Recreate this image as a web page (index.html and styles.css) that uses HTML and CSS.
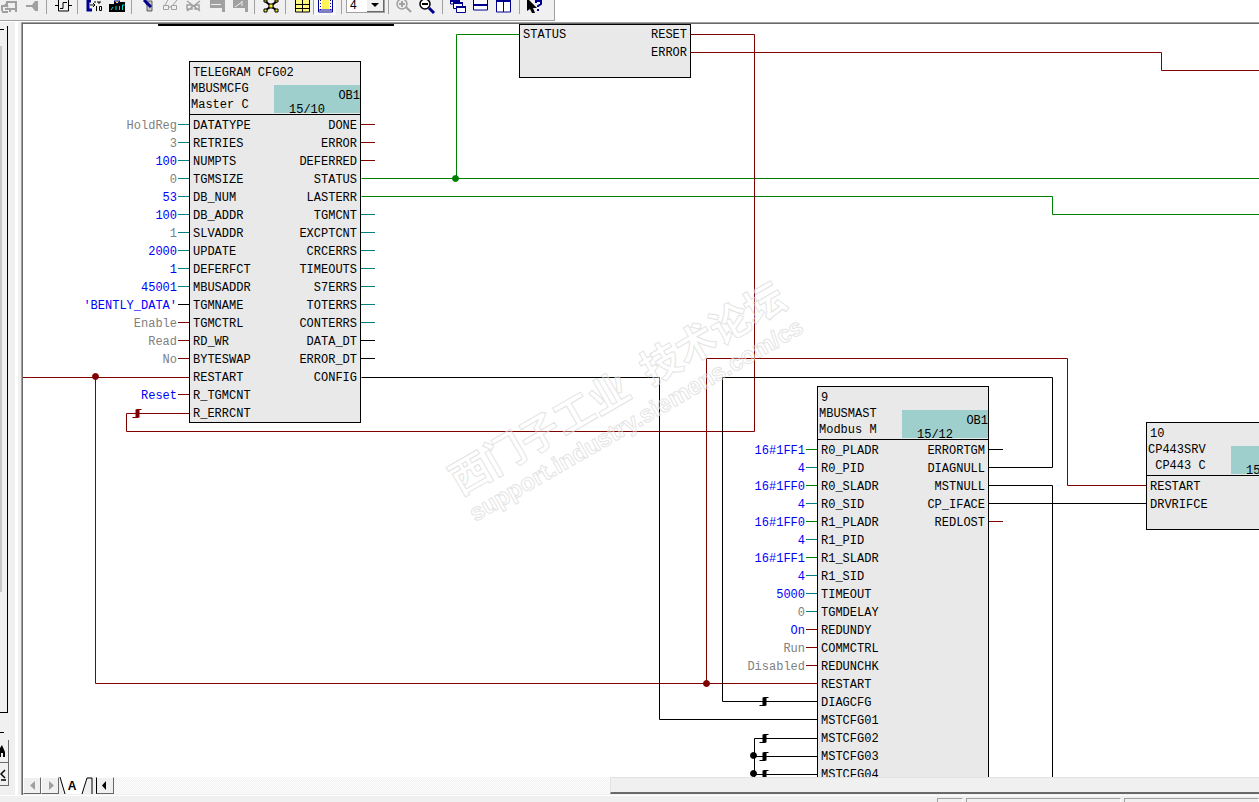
FILE: index.html
```html
<!DOCTYPE html>
<html lang="en">
<head>
    <meta charset="UTF-8">
    <meta name="viewport" content="width=device-width, initial-scale=1.0">
    <title>CFC chart - Modbus</title>
    <link rel="stylesheet" href="styles.css">
</head>
<body>
    <div class="toolbar-row">
        <div class="toolbar">
            <button class="tool first" aria-label="Compile"><svg viewBox="0 0 18 14"><g fill="none" stroke="#a0a0a0" stroke-width="2"><path d="M2 10V5h5V1h10M2 11h6M16 0v11M10 11V8h6M5 8h4M5 3l3 3"/></g></svg></button>
            <button class="tool" aria-label="Step"><svg viewBox="0 0 18 14"><path d="M3 4h6l3-4h3v10h-3L9 6H3z" fill="#a0a0a0"/></svg></button>
            <span class="sep"></span>
            <button class="tool" aria-label="Block"><svg viewBox="0 0 18 14"><path d="M4.500 -2v12h10V-2M1 4.500h3M15 4.500h3M6 7.500h3V1.500h4" fill="none" stroke="#000"/></svg></button>
            <span class="sep"></span>
            <button class="tool" aria-label="Convert"><svg viewBox="0 0 18 14"><path d="M6 0H3v9h4" fill="none" stroke="#000090" stroke-width="3"/><path d="M5 4h5M8 2l2 2-2 2M10 0v2M13 0v2h2V0M11.500 5v5M14.500 5.500h2v4h-2z" fill="none" stroke="#000"/></svg></button>
            <button class="tool" aria-label="Download"><svg viewBox="0 0 18 14"><path d="M1 3h5V1h11v10H1z" fill="#000"/><path d="M3 9l2-3M8 9V5M11.500 9V5M14.500 9V4h2" stroke="#00e0e0" fill="none"/><path d="M6 0h6L9 3z" fill="#ffe840" stroke="#000090"/></svg></button>
            <span class="sep"></span>
            <button class="tool" aria-label="Edit"><svg viewBox="0 0 18 14"><path d="M6 0h7v10H8V5z" fill="#c0c0c0" stroke="#606060"/><path d="M5 -1l7 7" stroke="#000090" stroke-width="3"/></svg></button>
            <button class="tool" aria-label="Watch"><svg viewBox="0 0 18 14"><path d="M1.500 4.500h5v4h-5zM9.500 4.500h5v4h-5zM6 6h4M3 4l3-5M11 4l4-5" fill="none" stroke="#a0a0a0"/></svg></button>
            <button class="tool" aria-label="Unwatch"><svg viewBox="0 0 18 14"><path d="M2 0l13 10M2 10L15 0M2 4h5v4H2zM10 4h4v4h-4z" fill="none" stroke="#a0a0a0" stroke-width="1.500"/></svg></button>
            <button class="tool" aria-label="Sheet"><svg viewBox="0 0 18 14"><path d="M2 -1h15v12h-3V7H2z" fill="#a0a0a0"/><path d="M3 3.500h10" stroke="#eee"/></svg></button>
            <button class="tool" aria-label="Sheet forward"><svg viewBox="0 0 18 14"><path d="M2 -1h15v12h-3V7H2z" fill="#a0a0a0"/><path d="M4 6l7-5M11 0v5" stroke="#eee"/></svg></button>
            <span class="sep"></span>
            <button class="tool" aria-label="Network"><svg viewBox="0 0 18 14"><path d="M3 0l12 10M15 0L3 10" stroke="#000" stroke-width="2"/><path d="M7 3h4v4H7zM2 8h3v3H2zM13 8h3v3h-3zM2 -1h3v2H2zM13 -1h3v2h-3z" fill="#f4ec20" stroke="#000"/></svg></button>
            <span class="sep"></span>
            <button class="tool" aria-label="Table"><svg viewBox="0 0 18 14"><path d="M2 -1h14v12H2z" fill="#fff980"/><path d="M2.500 -1v12h14V-1M9.500 -1v12M2 3.500h14M2 7.500h14" fill="none" stroke="#000"/></svg></button>
            <button class="tool pressed" aria-label="Sheet view"><svg viewBox="0 0 18 14"><path d="M1.500 -1v13h14V-1" fill="#fff" stroke="#000090"/><path d="M5 -1h7v10H5z" fill="#fff35a"/><path d="M3.500 0v10M13.500 0v10" stroke="#000090" stroke-dasharray="1 2"/><path d="M2 10h13" stroke="#000090"/></svg></button>
            <span class="sep wide"></span>
            <span class="combo">
                <select aria-label="Layer"><option>4</option></select>
                <span class="combo-arrow"></span>
            </span>
            <span class="sep"></span>
            <button class="tool" aria-label="Zoom in"><svg viewBox="0 0 18 14"><circle cx="6" cy="3" r="5" fill="none" stroke="#a0a0a0" stroke-width="1.500"/><path d="M3 3h6M6 0v6M10 6l5 5" stroke="#a0a0a0" stroke-width="2"/></svg></button>
            <button class="tool" aria-label="Zoom out"><svg viewBox="0 0 18 14"><circle cx="6" cy="3" r="5" fill="#fff" stroke="#000" stroke-width="1.500"/><path d="M3 3h6" stroke="#000" stroke-width="2"/><path d="M10 7l5 5" stroke="#000090" stroke-width="3"/></svg></button>
            <span class="sep"></span>
            <button class="tool" aria-label="Cascade"><svg viewBox="0 0 18 14"><g fill="#fff" stroke="#000090"><path d="M.500 -3v6h9v-6z"/><path d="M3.500 1.500h9v6h-9z"/><path d="M6.500 5.500h9v6h-9z"/></g><path d="M0 0h10M3 2h10M6 6h10" stroke="#000090" stroke-width="2"/></svg></button>
            <button class="tool" aria-label="Tile rows"><svg viewBox="0 0 18 14"><path d="M.500 -2v11h14v-11z" fill="#fff" stroke="#000090"/><path d="M0 4h15" stroke="#000090" stroke-width="2"/></svg></button>
            <button class="tool" aria-label="Tile columns"><svg viewBox="0 0 18 14"><path d="M.500 -1v12h14v-12zM7.500 0v11" fill="#fff" stroke="#000090"/><path d="M0 0h15" stroke="#000090" stroke-width="2"/></svg></button>
            <span class="sep"></span>
            <button class="tool" aria-label="Help"><svg viewBox="0 0 18 14"><path d="M0 -3v13l3-2 2 4h3L6 7h4z" fill="#000"/><path d="M9 2V0h5v3l-3 2v1M11 8v2" fill="none" stroke="#000090" stroke-width="2"/></svg></button>
        </div>
    </div>

    <main class="main">
        <aside class="side">
            <div class="tree"><div class="tree-scroll"></div></div>
            <div class="side-line"></div>
            <button class="side-btn" aria-label="Find"><svg viewBox="0 0 8 22"><path d="M0 17V8l2-3 3 7v5H3v-4H1v4z" fill="#000"/></svg></button>
            <button class="side-btn" aria-label="Back"><svg viewBox="0 0 8 22"><path d="M5 7l-4 4 4 4M1 17h5" fill="none" stroke="#000" stroke-width="1.500"/></svg></button>
        </aside>

        <section class="work">
            <div class="canvas">
                <div class="sheet-edge"></div>

                <div class="node node-top">
                    <div class="block spare">
                        <div class="pins">
                            <ul><li>STATUS</li></ul>
                            <ul class="right"><li>RESET</li><li>ERROR</li></ul>
                        </div>
                    </div>
                </div>

                <div class="node node-cfg">
                    <ul class="args">
                        <li class="int def">HoldReg</li>
                        <li class="int def">3</li>
                        <li class="int">100</li>
                        <li class="int def">0</li>
                        <li class="int">53</li>
                        <li class="int">100</li>
                        <li class="int def">1</li>
                        <li class="int">2000</li>
                        <li class="int">1</li>
                        <li class="int">45001</li>
                        <li class="any">'BENTLY_DATA'</li>
                        <li class="bool def">Enable</li>
                        <li class="bool def">Read</li>
                        <li class="bool def">No</li>
                        <li class="none"></li>
                        <li class="bool">Reset</li>
                    </ul>
                    <div class="block">
                        <div class="head">
                            <p class="title">TELEGRAM CFG02</p>
                            <p>MBUSMCFG<br>Master C</p>
                            <div class="task"><span>OB1</span>15/10</div>
                        </div>
                        <div class="pins">
                            <ul>
                                <li>DATATYPE</li><li>RETRIES</li><li>NUMPTS</li><li>TGMSIZE</li>
                                <li>DB_NUM</li><li>DB_ADDR</li><li>SLVADDR</li><li>UPDATE</li>
                                <li>DEFERFCT</li><li>MBUSADDR</li><li>TGMNAME</li><li>TGMCTRL</li>
                                <li>RD_WR</li><li>BYTESWAP</li><li>RESTART</li><li>R_TGMCNT</li>
                                <li>R_ERRCNT</li>
                            </ul>
                            <ul class="right">
                                <li>DONE</li><li>ERROR</li><li>DEFERRED</li><li>STATUS</li>
                                <li>LASTERR</li><li>TGMCNT</li><li>EXCPTCNT</li><li>CRCERRS</li>
                                <li>TIMEOUTS</li><li>S7ERRS</li><li>TOTERRS</li><li>CONTERRS</li>
                                <li>DATA_DT</li><li>ERROR_DT</li><li>CONFIG</li>
                            </ul>
                        </div>
                    </div>
                    <ul class="outs">
                        <li class="bool"></li><li class="bool"></li><li class="bool"></li>
                        <li class="none"></li><li class="none"></li>
                        <li class="int"></li><li class="int"></li><li class="int"></li><li class="int"></li>
                        <li class="int"></li><li class="int"></li><li class="int"></li>
                        <li class="any"></li><li class="any"></li>
                    </ul>
                </div>

                <div class="node node-mast">
                    <ul class="args">
                        <li class="word">16#1FF1</li>
                        <li class="int">4</li>
                        <li class="word">16#1FF0</li>
                        <li class="int">4</li>
                        <li class="word">16#1FF0</li>
                        <li class="int">4</li>
                        <li class="word">16#1FF1</li>
                        <li class="int">4</li>
                        <li class="int">5000</li>
                        <li class="int def">0</li>
                        <li class="bool">On</li>
                        <li class="bool def">Run</li>
                        <li class="bool def">Disabled</li>
                    </ul>
                    <div class="block">
                        <div class="head">
                            <p class="title">9</p>
                            <p>MBUSMAST<br>Modbus M</p>
                            <div class="task"><span>OB1</span>15/12</div>
                        </div>
                        <div class="pins">
                            <ul>
                                <li>R0_PLADR</li><li>R0_PID</li><li>R0_SLADR</li><li>R0_SID</li>
                                <li>R1_PLADR</li><li>R1_PID</li><li>R1_SLADR</li><li>R1_SID</li>
                                <li>TIMEOUT</li><li>TGMDELAY</li><li>REDUNDY</li><li>COMMCTRL</li>
                                <li>REDUNCHK</li><li>RESTART</li><li>DIAGCFG</li><li>MSTCFG01</li>
                                <li>MSTCFG02</li><li>MSTCFG03</li><li>MSTCFG04</li>
                            </ul>
                            <ul class="right">
                                <li>ERRORTGM</li><li>DIAGNULL</li><li>MSTNULL</li><li>CP_IFACE</li><li>REDLOST</li>
                            </ul>
                        </div>
                    </div>
                    <ul class="outs">
                        <li class="any"></li><li class="none"></li><li class="none"></li><li class="none"></li><li class="bool"></li>
                    </ul>
                </div>

                <div class="node node-srv">
                    <div class="block spare">
                        <div class="head">
                            <p class="title">10</p>
                            <p>CP443SRV<br>&nbsp;CP443 C</p>
                            <div class="task"><br>15</div>
                        </div>
                        <div class="pins">
                            <ul><li>RESTART</li><li>DRVRIFCE</li></ul>
                        </div>
                    </div>
                </div>

                <svg class="wires">
                    <defs>
                        <g id="edge"><path d="M-5 4H1M-1 -4H4" stroke-width="1"/><path d="M0 -4V4" stroke-width="4"/></g>
                    </defs>
                    <g transform="translate(-22.5 -23.5)" fill="none">
                        <g stroke="#008000">
                            <path d="M519 34H456V178"/>
                            <path d="M361 178H4000"/>
                            <path d="M361 196H1052V214H4000"/>
                            <circle cx="455" cy="178" r="3" fill="#008000"/>
                        </g>
                        <g stroke="#800000">
                            <path d="M690 34H754V431H126V413H189"/>
                            <path d="M690 52H1161V70H4000"/>
                            <path d="M706 683V358H1067V485H1146"/>
                            <path d="M0 377H189M95 377V683H817"/>
                            <circle cx="95" cy="376" r="3" fill="#800000"/>
                            <circle cx="706" cy="683" r="3" fill="#800000"/>
                            <use href="#edge" x="137" y="413"/>
                        </g>
                        <g stroke="#000">
                            <path d="M361 377H659V719H817"/>
                            <path d="M817 701H722V377H1052V467H988"/>
                            <path d="M988 485H1052V2000"/>
                            <path d="M988 503H1146"/>
                            <path d="M817 738H754V2000M754 756H817M754 774H817"/>
                            <circle cx="753" cy="755" r="3" fill="#000"/>
                            <circle cx="753" cy="773" r="3" fill="#000"/>
                            <use href="#edge" x="764" y="701"/>
                            <use href="#edge" x="764" y="738"/>
                            <use href="#edge" x="764" y="756"/>
                            <use href="#edge" x="764" y="774"/>
                        </g>
                    </g>
                </svg>

                <div class="watermark">
                    <p class="wm-name"><span>西门子工业</span><span>技术论坛</span></p>
                    <p class="wm-url">support.industry.siemens.com/cs</p>
                </div>
            </div>

            <div class="tabs">
                <button class="nav" aria-label="Previous sheet"><svg viewBox="0 0 16 16"><path d="M11 3v9L6 7.500z" fill="#a0a0a0"/></svg></button>
                <button class="nav" aria-label="Next sheet"><svg viewBox="0 0 16 16"><path d="M7 3v9l5-4.500z" fill="#a0a0a0"/></svg></button>
                <button class="tab"><svg viewBox="0 0 36 18"><path d="M1 0l5 17h17l5-17z" fill="#fff"/><path d="M1 0l5 17M23 17l5-16h5v16" fill="none" stroke="#000"/></svg><span>A</span></button>
                <button class="nav scroll-left" aria-label="Scroll left"><svg viewBox="0 0 16 16"><path d="M9 3v9L5 7.500z" fill="#000"/></svg></button>
                <div class="track"><div class="thumb"></div></div>
            </div>
        </section>
    </main>

    <footer class="status">
        <span class="cell small"></span>
        <span class="cell medium"></span>
        <span class="cell large"></span>
    </footer>
</body>
</html>
```
FILE: styles.css
```css
* {
    margin: 0;
    padding: 0;
    box-sizing: border-box;
}
body {
    height: 100vh;
    display: flex;
    flex-direction: column;
    overflow: hidden;
    background: #f0f0f0;
    color: #000;
    font-family: "Liberation Mono", "Courier New", monospace;
    font-size: 12px;
}
ul {
    list-style: none;
}
button {
    border: none;
    background: #f0f0f0;
}
svg {
    display: block;
}

/* toolbar */
.toolbar-row {
    height: 22px;
    background: #fff;
    flex: none;
}
.toolbar {
    display: flex;
    width: 555px;
    height: 21px;
    background: #f0f0f0;
    border-right: 1px solid #a0a0a0;
    border-bottom: 1px solid #a0a0a0;
}
.tool {
    flex: none;
    width: 23px;
    height: 15px;
    padding-left: 3px;
}
.tool svg {
    width: 18px;
    height: 14px;
    overflow: visible;
}
.tool.first {
    margin-left: -3px;
}
.tool.pressed {
    background: #f8f8f8;
    border-left: 1px solid #a0a0a0;
    border-bottom: 1px solid #fff;
}
.sep {
    flex: none;
    width: 8px;
    height: 14px;
    border-right: 4px solid #f0f0f0;
    background: linear-gradient(to left, #a0a0a0 1px, #f0f0f0 1px);
    background-clip: padding-box;
}
.sep.wide {
    width: 10px;
}
.combo {
    position: relative;
    width: 39px;
    height: 13px;
}
.combo select {
    display: block;
    width: 100%;
    height: 13px;
    padding: 0 0 3px 3px;
    appearance: none;
    border: 1px solid #a0a0a0;
    border-top: none;
    border-radius: 0;
    background: #fff;
    color: #000;
    font: 12px/10px "Liberation Sans", Arial, sans-serif;
}
.combo-arrow {
    position: absolute;
    top: 0;
    right: 1px;
    width: 17px;
    height: 12px;
    background: #f0f0f0;
    border-right: 1px solid #696969;
    border-bottom: 1px solid #696969;
    pointer-events: none;
}
.combo-arrow::after {
    content: "";
    display: block;
    width: 0;
    margin: 3px auto 0;
    border: 4px solid transparent;
    border-top-color: #000;
}

/* left panel */
.main {
    flex: 1;
    min-height: 0;
    display: flex;
}
.side {
    flex: none;
    display: flex;
    flex-direction: column;
    width: 21px;
    padding: 4px 0 9px;
    background: linear-gradient(to right, #f0f0f0 15px, #fff 15px, #fff 18px, #f0f0f0 18px);
}
.tree {
    flex: 1;
    width: 8px;
    padding-top: 20px;
    border-right: 1px solid #000;
    border-bottom: 1px solid #000;
    background: linear-gradient(#000, #000) 0 3px / 4px 1px no-repeat, #f0f0f0;
}
.tree-scroll {
    width: 2px;
    height: 82%;
    background: #c8c8c8;
}
.side-line {
    width: 4px;
    height: 1px;
    margin: 19px 0 7px;
    background: #000;
}
.side-btn {
    width: 9px;
    height: 23px;
    border-right: 1px solid #696969;
    border-bottom: 1px solid #696969;
}
.side-btn svg {
    width: 8px;
    height: 22px;
}

/* chart */
.work {
    flex: 1;
    min-width: 0;
    display: flex;
    flex-direction: column;
    border-left: 1px solid #a0a0a0;
    border-top: 1px solid #a0a0a0;
}
.canvas {
    position: relative;
    flex: 1;
    min-height: 0;
    overflow: hidden;
    background: #fff;
    border-left: 1px solid #696969;
    border-top: 1px solid #696969;
}
.sheet-edge {
    position: absolute;
    left: 135px;
    top: 0;
    width: 236px;
    height: 2px;
    background: #000;
}
.node {
    position: absolute;
    display: flex;
    align-items: flex-start;
}
/* the argument column is 120px wide, left of the block */
.node-top {
    left: 496px;
    top: 0;
}
.node-cfg {
    left: 46px;
    top: 37px;
}
.node-mast {
    left: 674px;
    top: 362px;
}
.node-srv {
    left: 1123px;
    top: 398px;
}
.block {
    width: 172px;
    background: #e9e9e9;
    border: 1px solid #000;
}
.block.spare {
    padding-bottom: 16px;
}
.head {
    display: grid;
    grid-template-columns: 1fr 86px;
    align-content: start;
    height: 53px;
    padding: 3px 0 0 1px;
    line-height: 16px;
    border-bottom: 1px solid #000;
}
.head .title {
    grid-column: 1 / 3;
    padding-left: 2px;
}
.task {
    height: 28px;
    margin-top: 4px;
    padding: 4px 0 0 15px;
    background: #9fcfcd;
    line-height: 14px;
}
.task span {
    display: block;
    text-align: right;
}
.pins {
    display: flex;
    justify-content: space-between;
    padding: 0 3px;
}
.head + .pins {
    padding-top: 1px;
}
.pins .right {
    text-align: right;
}
.node li {
    height: 18px;
    line-height: 20px;
    white-space: nowrap;
}
.args,
.outs {
    padding-top: 55px;
}
.args {
    width: 120px;
    color: #0000ff;
}
.args li {
    display: flex;
    justify-content: flex-end;
}
.args .def {
    color: #808080;
}
.args li::after,
.outs li::after {
    content: "";
    display: block;
    flex: none;
    width: 11px;
    height: 1px;
    margin: 8px 0 0 1px;
}
.outs {
    width: 14px;
}
.outs li {
    display: flex;
}
.outs li::after {
    width: 14px;
    margin-left: 0;
}
.node .int::after {
    background: #008080;
}
.node .word::after {
    background: #008000;
}
.node .bool::after {
    background: #800000;
}
.node .any::after {
    background: #000;
}
.wires {
    position: absolute;
    left: 0;
    top: 0;
    width: 100%;
    height: 100%;
}
.watermark {
    position: absolute;
    left: 409px;
    top: 331px;
    width: 420px;
    transform: rotate(-30deg);
    white-space: nowrap;
    color: rgba(255, 255, 255, 0.3);
    -webkit-text-stroke: 1px rgba(215, 215, 215, 0.7);
    pointer-events: none;
}
.wm-name {
    display: flex;
    gap: 20px;
    font: bold 40px/44px "Liberation Sans", "Noto Sans CJK SC", sans-serif;
}
.wm-url {
    font: bold 24px/28px "Liberation Sans", Arial, sans-serif;
}

/* sheet tabs and scrollbar */
.tabs {
    flex: none;
    display: flex;
    height: 18px;
    border-left: 1px solid #696969;
}
.nav {
    flex: none;
    width: 18px;
    height: 17px;
    border: 1px solid #fff;
    border-right-color: #696969;
    border-bottom-color: #696969;
}
.nav svg {
    width: 16px;
    height: 16px;
}
.tab {
    position: relative;
    flex: none;
    width: 36px;
    height: 18px;
    margin-right: 1px;
    font: bold 12px/18px "Liberation Sans", Arial, sans-serif;
}
.tab svg {
    position: absolute;
    left: 0;
    top: 0;
    width: 36px;
    height: 18px;
}
.tab span {
    position: relative;
    padding-right: 10px;
}
.scroll-left {
    border-left-color: #000;
}
.track {
    flex: 1;
    height: 17px;
    background: repeating-conic-gradient(#fff 0 25%, #f0f0f0 0 50%) 0 0 / 2px 2px;
}
.thumb {
    height: 17px;
    margin-left: calc(43% + 4px);
    background: #f0f0f0;
    border-top: 1px solid #e3e3e3;
    border-left: 1px solid #e3e3e3;
    border-bottom: 2px solid #696969;
}

/* status bar */
.status {
    flex: none;
    display: flex;
    justify-content: flex-end;
    gap: 3px;
    height: 7px;
    padding-top: 2px;
    border-top: 1px solid #fff;
}
.cell {
    border-top: 1px solid #a0a0a0;
    border-left: 1px solid #a0a0a0;
    border-right: 1px solid #fff;
}
.cell.small {
    width: 26px;
}
.cell.medium {
    width: 155px;
}
.cell.large {
    width: 135px;
}
```
